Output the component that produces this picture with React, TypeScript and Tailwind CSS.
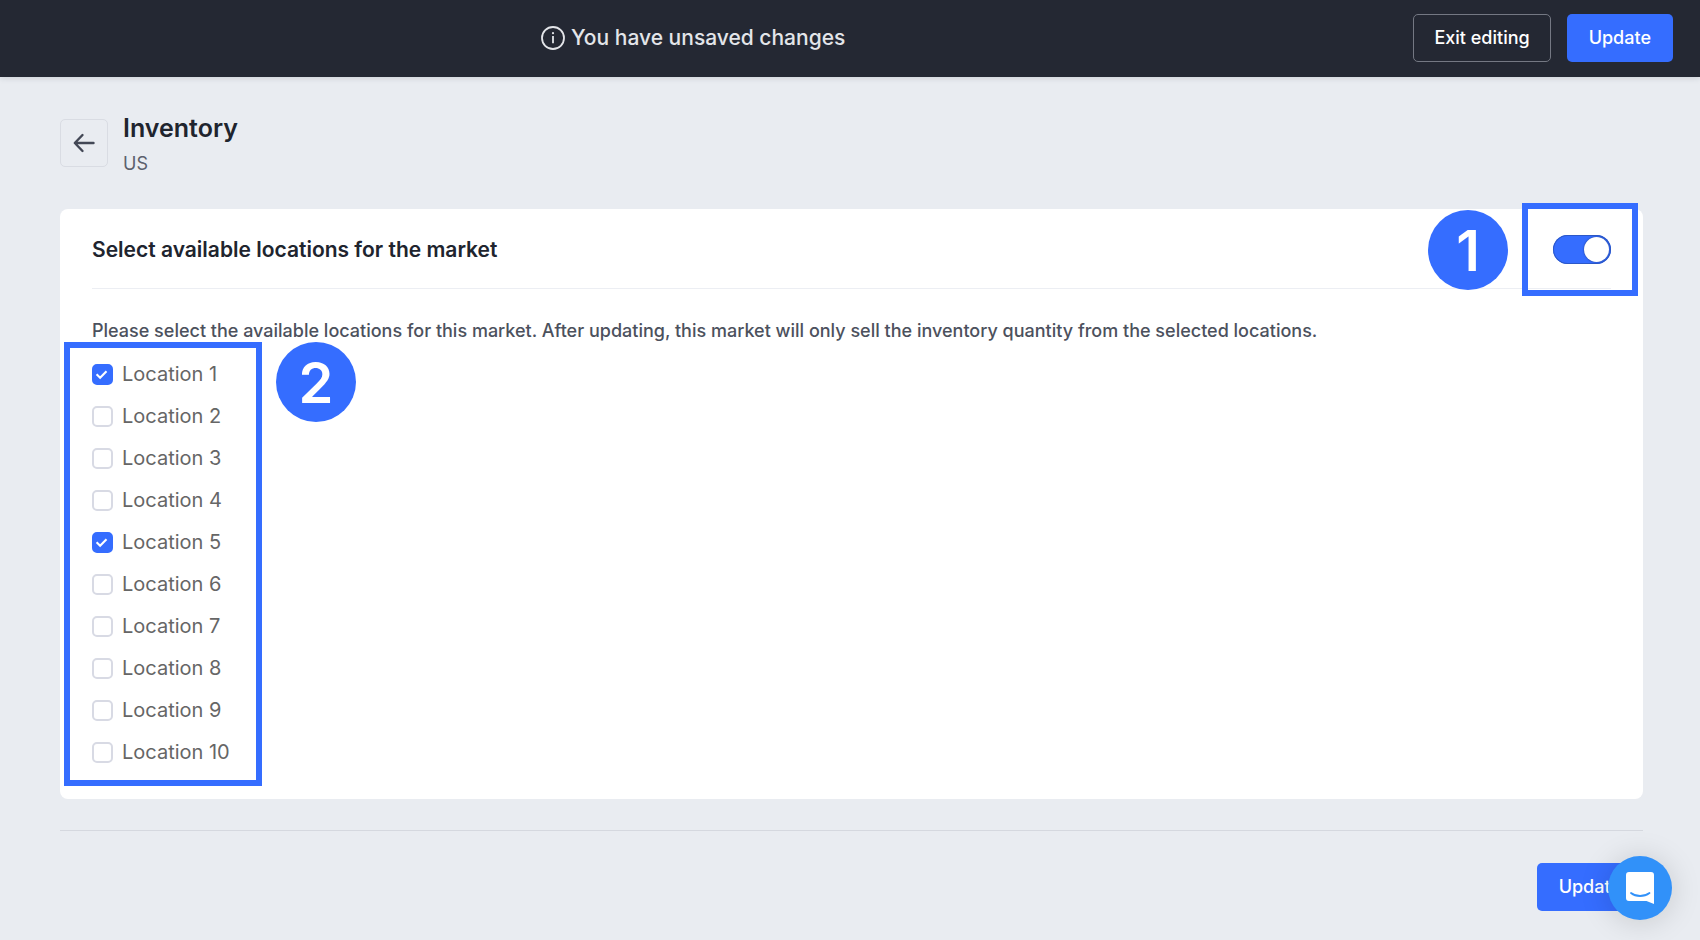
import { useState } from "react";

const initialLocations = Array.from({ length: 10 }, (_, i) => ({
  id: i + 1,
  name: `Location ${i + 1}`,
  selected: i === 0 || i === 4,
}));

function InfoIcon() {
  return (
    <svg viewBox="0 0 24 24" className="size-6" fill="none" stroke="currentColor" aria-hidden="true">
      <circle cx="12" cy="12" r="11" strokeWidth="1.8" />
      <path d="M12 10v7.2" strokeWidth="1.8" />
      <circle cx="12" cy="7.2" r="1.1" fill="currentColor" stroke="none" />
    </svg>
  );
}

function StepBadge({ step, className }: { step: number; className: string }) {
  return (
    <span
      className={`absolute flex size-20 items-center justify-center rounded-full bg-[#356dff] pt-0.5 text-[56px] leading-none font-semibold text-white ${className}`}
    >
      {step}
    </span>
  );
}

function UpdateButton() {
  return (
    <button type="button" className="h-12 rounded-[5px] bg-[#356dff] px-[22px] text-lg font-medium text-white">
      Update
    </button>
  );
}

export default function App() {
  const [enabled, setEnabled] = useState(true);
  const [locations, setLocations] = useState(initialLocations);

  const toggleLocation = (id: number) => {
    setLocations((prev) =>
      prev.map((item) => (item.id === id ? { ...item, selected: !item.selected } : item))
    );
  };

  return (
    <div className="min-h-screen bg-[#e9ecf1] font-['Inter',sans-serif] text-[#20242e]">
      <header className="flex h-[77px] items-center bg-[#242833] pb-0.5 shadow-[0_1px_6px_rgba(36,40,51,0.15)]">
        <div className="flex flex-1 items-center justify-center gap-1.5 text-[#e3e5e9]">
          <InfoIcon />
          <p className="text-[21px] font-medium">You have unsaved changes</p>
        </div>
        <div className="flex gap-4 px-[27px]">
          <button
            type="button"
            className="h-12 rounded-[5px] border border-[#747883] px-5 text-lg font-medium text-white"
          >
            Exit editing
          </button>
          <UpdateButton />
        </div>
      </header>

      <main className="pt-[33px] pr-[57px] pl-[60px]">
        <div className="flex items-start gap-[15px]">
          <button
            type="button"
            aria-label="Back"
            className="mt-[9px] flex size-12 items-center justify-center rounded-[5px] border border-[#d9dce3] text-[#434856]"
          >
            <svg
              viewBox="0 0 22 20"
              className="h-5 w-[22px]"
              fill="none"
              stroke="currentColor"
              strokeWidth="2.4"
              strokeLinecap="round"
              strokeLinejoin="round"
            >
              <path d="M20.5 10H2M9.5 2 1.8 10l7.7 8" />
            </svg>
          </button>
          <div>
            <h1 className="text-[25px] leading-9 font-semibold">Inventory</h1>
            <p className="text-lg leading-9 text-[#5b606c]">US</p>
          </div>
        </div>

        <section className="mt-[27px] rounded-lg bg-white px-8 pb-[26px]">
          <div className="flex h-20 items-center justify-between border-b border-[#eceef3] pt-0.5">
            <h2 className="text-[21px] font-semibold">Select available locations for the market</h2>
            <div className="relative flex">
              <input
                type="checkbox"
                role="switch"
                aria-label="Limit inventory to selected locations"
                checked={enabled}
                onChange={() => setEnabled(!enabled)}
                className="peer h-[29px] w-[58px] appearance-none rounded-full bg-[#c9cdd6] checked:bg-[#356dff] checked:shadow-[inset_0_0_0_1px_#2c58c8]"
              />
              <span className="pointer-events-none absolute top-0.5 left-0.5 size-[25px] rounded-full bg-white shadow-[0_0_2px_rgba(20,40,100,0.8)] peer-checked:left-[31px]" />
              <span className="pointer-events-none absolute -inset-y-8 right-[-27px] -left-[31px] border-6 border-[#356dff]" />
              <StepBadge step={1} className="-top-[25px] right-[103px]" />
            </div>
          </div>

          <p className="pt-7 text-lg leading-7 font-medium text-[#4c515d]">
            Please select the available locations for this market. After updating, this market will only sell the
            inventory quantity from the selected locations.
          </p>

          <div className="relative mt-2 w-[142px]">
            <ul>
              {locations.map((location) => (
                <li key={location.id}>
                  <label className="flex h-[42px] items-center gap-[9px] text-xl text-[#666]">
                    <span className="relative flex">
                      <input
                        type="checkbox"
                        checked={location.selected}
                        onChange={() => toggleLocation(location.id)}
                        className="size-[21px] appearance-none rounded-[5px] border-2 border-[#d8dae4] bg-white checked:border-[#356dff] checked:bg-[#356dff]"
                      />
                      {location.selected && (
                        <svg
                          viewBox="0 0 22 22"
                          className="pointer-events-none absolute inset-0"
                          fill="none"
                          stroke="white"
                          strokeWidth="2.2"
                        >
                          <path d="m4.8 10.8 3.7 3.6 6.7-6.8" />
                        </svg>
                      )}
                    </span>
                    {location.name}
                  </label>
                </li>
              ))}
            </ul>
            <span className="pointer-events-none absolute -inset-x-7 -top-[11px] -bottom-[13px] border-6 border-[#356dff]" />
            <StepBadge step={2} className="-top-[11px] left-[184px]" />
          </div>
        </section>

        <footer className="mt-[31px] flex justify-end border-t border-[#d5d8df] py-8">
          <UpdateButton />
        </footer>
      </main>

      <button
        type="button"
        aria-label="Open chat"
        className="fixed right-7 bottom-5 flex size-16 items-center justify-center rounded-full bg-[#3191f9] shadow-[0_2px_30px_rgba(0,0,0,0.15)]"
      >
        <svg viewBox="0 0 28 32" className="h-8 w-7">
          <path d="M3 0h22a3 3 0 0 1 3 3v29l-7.500-3H3a3 3 0 0 1-3-3V3a3 3 0 0 1 3-3z" fill="white" />
          <path d="M5 21c5 4 13 4 18.500 0" fill="none" stroke="#3191f9" strokeWidth="1.8" strokeLinecap="round" />
        </svg>
      </button>
    </div>
  );
}
